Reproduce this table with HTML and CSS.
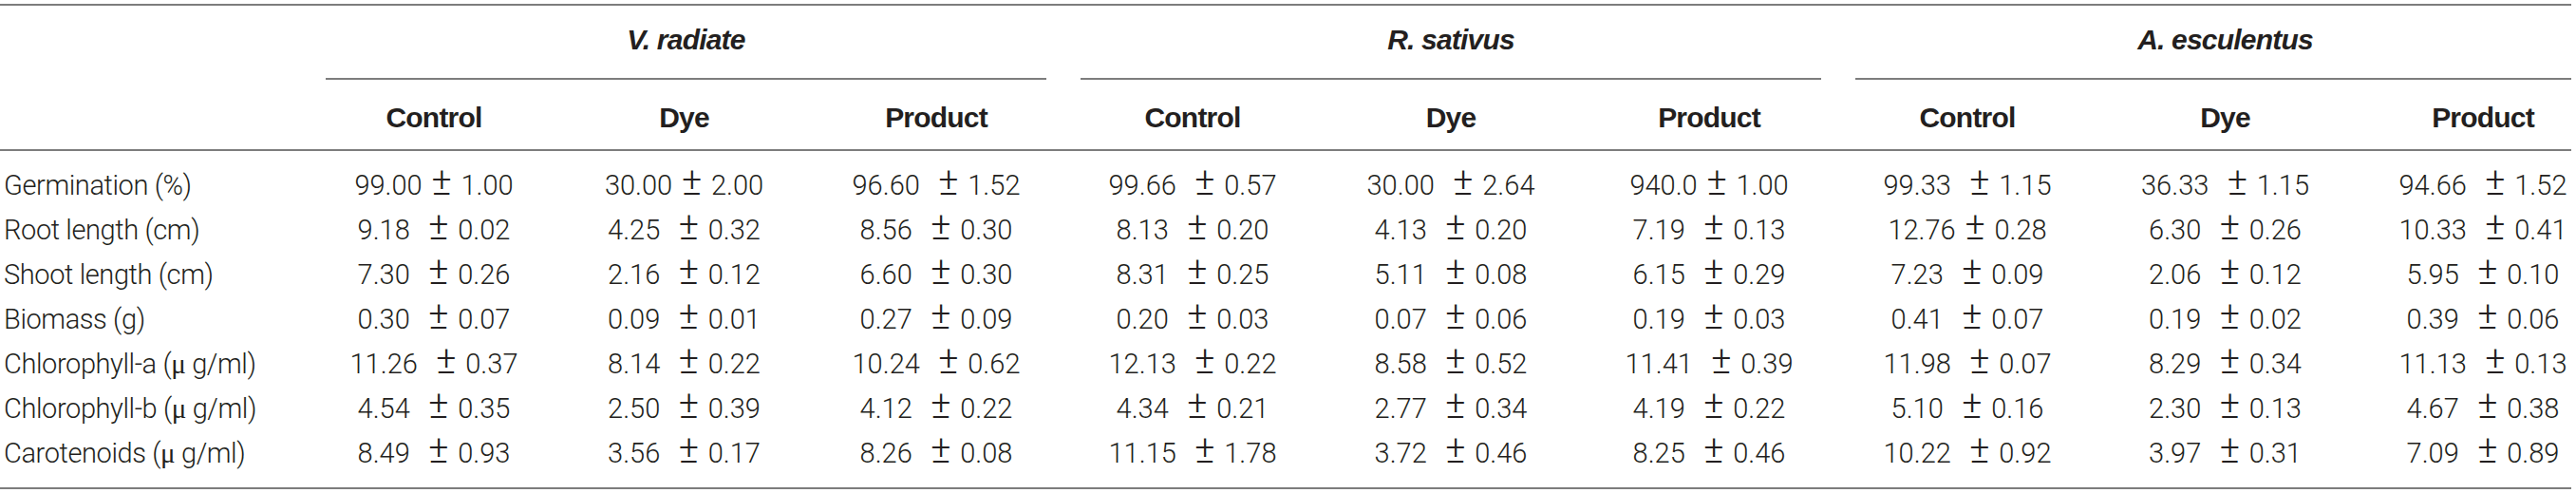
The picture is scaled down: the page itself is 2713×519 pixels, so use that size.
FILE: index.html
```html
<!DOCTYPE html>
<html lang="en">
<head>
<meta charset="utf-8">
<title>Effect of dye and degradation product on plant growth</title>
<link rel="stylesheet" href="styles.css">
</head>
<body>
<div class="table">
  <div class="thead grid">
    <div class="corner"></div>
    <div class="group"><span>V. radiate</span></div>
    <div class="group"><span>R. sativus</span></div>
    <div class="group"><span>A. esculentus</span></div>
    <div class="colh">Control</div>
    <div class="colh">Dye</div>
    <div class="colh">Product</div>
    <div class="colh">Control</div>
    <div class="colh">Dye</div>
    <div class="colh">Product</div>
    <div class="colh">Control</div>
    <div class="colh">Dye</div>
    <div class="colh">Product</div>
  </div>
  <div class="tbody grid">
    <div class="label">Germination (%)</div>
    <div class="val">99.00<span class="pm"> ± </span>1.00</div><div class="val">30.00<span class="pm"> ± </span>2.00</div><div class="val">96.60<span class="pm">  ± </span>1.52</div>
    <div class="val">99.66<span class="pm">  ± </span>0.57</div><div class="val">30.00<span class="pm">  ± </span>2.64</div><div class="val">940.0<span class="pm"> ± </span>1.00</div>
    <div class="val">99.33<span class="pm">  ± </span>1.15</div><div class="val">36.33<span class="pm">  ± </span>1.15</div><div class="val">94.66<span class="pm">  ± </span>1.52</div>

    <div class="label">Root length (cm)</div>
    <div class="val">9.18<span class="pm">  ± </span>0.02</div><div class="val">4.25<span class="pm">  ± </span>0.32</div><div class="val">8.56<span class="pm">  ± </span>0.30</div>
    <div class="val">8.13<span class="pm">  ± </span>0.20</div><div class="val">4.13<span class="pm">  ± </span>0.20</div><div class="val">7.19<span class="pm">  ± </span>0.13</div>
    <div class="val">12.76<span class="pm"> ± </span>0.28</div><div class="val">6.30<span class="pm">  ± </span>0.26</div><div class="val">10.33<span class="pm">  ± </span>0.41</div>

    <div class="label">Shoot length (cm)</div>
    <div class="val">7.30<span class="pm">  ± </span>0.26</div><div class="val">2.16<span class="pm">  ± </span>0.12</div><div class="val">6.60<span class="pm">  ± </span>0.30</div>
    <div class="val">8.31<span class="pm">  ± </span>0.25</div><div class="val">5.11<span class="pm">  ± </span>0.08</div><div class="val">6.15<span class="pm">  ± </span>0.29</div>
    <div class="val">7.23<span class="pm">  ± </span>0.09</div><div class="val">2.06<span class="pm">  ± </span>0.12</div><div class="val">5.95<span class="pm">  ± </span>0.10</div>

    <div class="label">Biomass (g)</div>
    <div class="val">0.30<span class="pm">  ± </span>0.07</div><div class="val">0.09<span class="pm">  ± </span>0.01</div><div class="val">0.27<span class="pm">  ± </span>0.09</div>
    <div class="val">0.20<span class="pm">  ± </span>0.03</div><div class="val">0.07<span class="pm">  ± </span>0.06</div><div class="val">0.19<span class="pm">  ± </span>0.03</div>
    <div class="val">0.41<span class="pm">  ± </span>0.07</div><div class="val">0.19<span class="pm">  ± </span>0.02</div><div class="val">0.39<span class="pm">  ± </span>0.06</div>

    <div class="label">Chlorophyll-a (<span class="mu">μ</span> g/ml)</div>
    <div class="val">11.26<span class="pm">  ± </span>0.37</div><div class="val">8.14<span class="pm">  ± </span>0.22</div><div class="val">10.24<span class="pm">  ± </span>0.62</div>
    <div class="val">12.13<span class="pm">  ± </span>0.22</div><div class="val">8.58<span class="pm">  ± </span>0.52</div><div class="val">11.41<span class="pm">  ± </span>0.39</div>
    <div class="val">11.98<span class="pm">  ± </span>0.07</div><div class="val">8.29<span class="pm">  ± </span>0.34</div><div class="val">11.13<span class="pm">  ± </span>0.13</div>

    <div class="label">Chlorophyll-b (<span class="mu">μ</span> g/ml)</div>
    <div class="val">4.54<span class="pm">  ± </span>0.35</div><div class="val">2.50<span class="pm">  ± </span>0.39</div><div class="val">4.12<span class="pm">  ± </span>0.22</div>
    <div class="val">4.34<span class="pm">  ± </span>0.21</div><div class="val">2.77<span class="pm">  ± </span>0.34</div><div class="val">4.19<span class="pm">  ± </span>0.22</div>
    <div class="val">5.10<span class="pm">  ± </span>0.16</div><div class="val">2.30<span class="pm">  ± </span>0.13</div><div class="val">4.67<span class="pm">  ± </span>0.38</div>

    <div class="label">Carotenoids (<span class="mu">μ</span> g/ml)</div>
    <div class="val">8.49<span class="pm">  ± </span>0.93</div><div class="val">3.56<span class="pm">  ± </span>0.17</div><div class="val">8.26<span class="pm">  ± </span>0.08</div>
    <div class="val">11.15<span class="pm">  ± </span>1.78</div><div class="val">3.72<span class="pm">  ± </span>0.46</div><div class="val">8.25<span class="pm">  ± </span>0.46</div>
    <div class="val">10.22<span class="pm">  ± </span>0.92</div><div class="val">3.97<span class="pm">  ± </span>0.31</div><div class="val">7.09<span class="pm">  ± </span>0.89</div>
  </div>
</div>
</body>
</html>
```

FILE: styles.css
```css
html, body {
  margin: 0;
  padding: 0;
  background: #ffffff;
}

body {
  color: #231f20;
  font-family: "Liberation Sans", Arial, sans-serif;
}

.table {
  width: 2708px;
  margin-top: 4px;
  overflow: hidden;
  border-top: 2px solid #7d7d7d;
  border-bottom: 2px solid #7d7d7d;
}

.grid {
  display: grid;
  width: 2751px;
  grid-template-columns: 325px 264px 263px 268px 272px 272px 272px 272px 271px 272px;
}

.thead {
  border-bottom: 2px solid #7d7d7d;
  font-family: "Liberation Sans", Arial, sans-serif;
  font-weight: 700;
  font-size: 30px;
  line-height: 30px;
  letter-spacing: -0.8px;
}

.corner {
  grid-row: 1 / span 2;
}

.group {
  grid-column: span 3;
  margin: 0 18px;
  height: 55px;
  padding-top: 21px;
  border-bottom: 2px solid #7d7d7d;
  text-align: center;
  font-style: italic;
}

.colh {
  height: 48px;
  padding-top: 25px;
  text-align: center;
}

.tbody {
  padding: 13px 0 12px;
  font-family: Roboto, "Liberation Sans", sans-serif;
  font-weight: 300;
  font-size: 29px;
  line-height: 47px;
}

.label {
  padding-left: 4px;
  white-space: nowrap;
  letter-spacing: -0.4px;
}

.val {
  height: 47px;
  text-align: center;
  white-space: pre;
}

.pm {
  font-size: 40px;
  line-height: 0;
}

.mu {
  font-family: "Liberation Serif", "Times New Roman", serif;
  font-weight: 400;
}
```
